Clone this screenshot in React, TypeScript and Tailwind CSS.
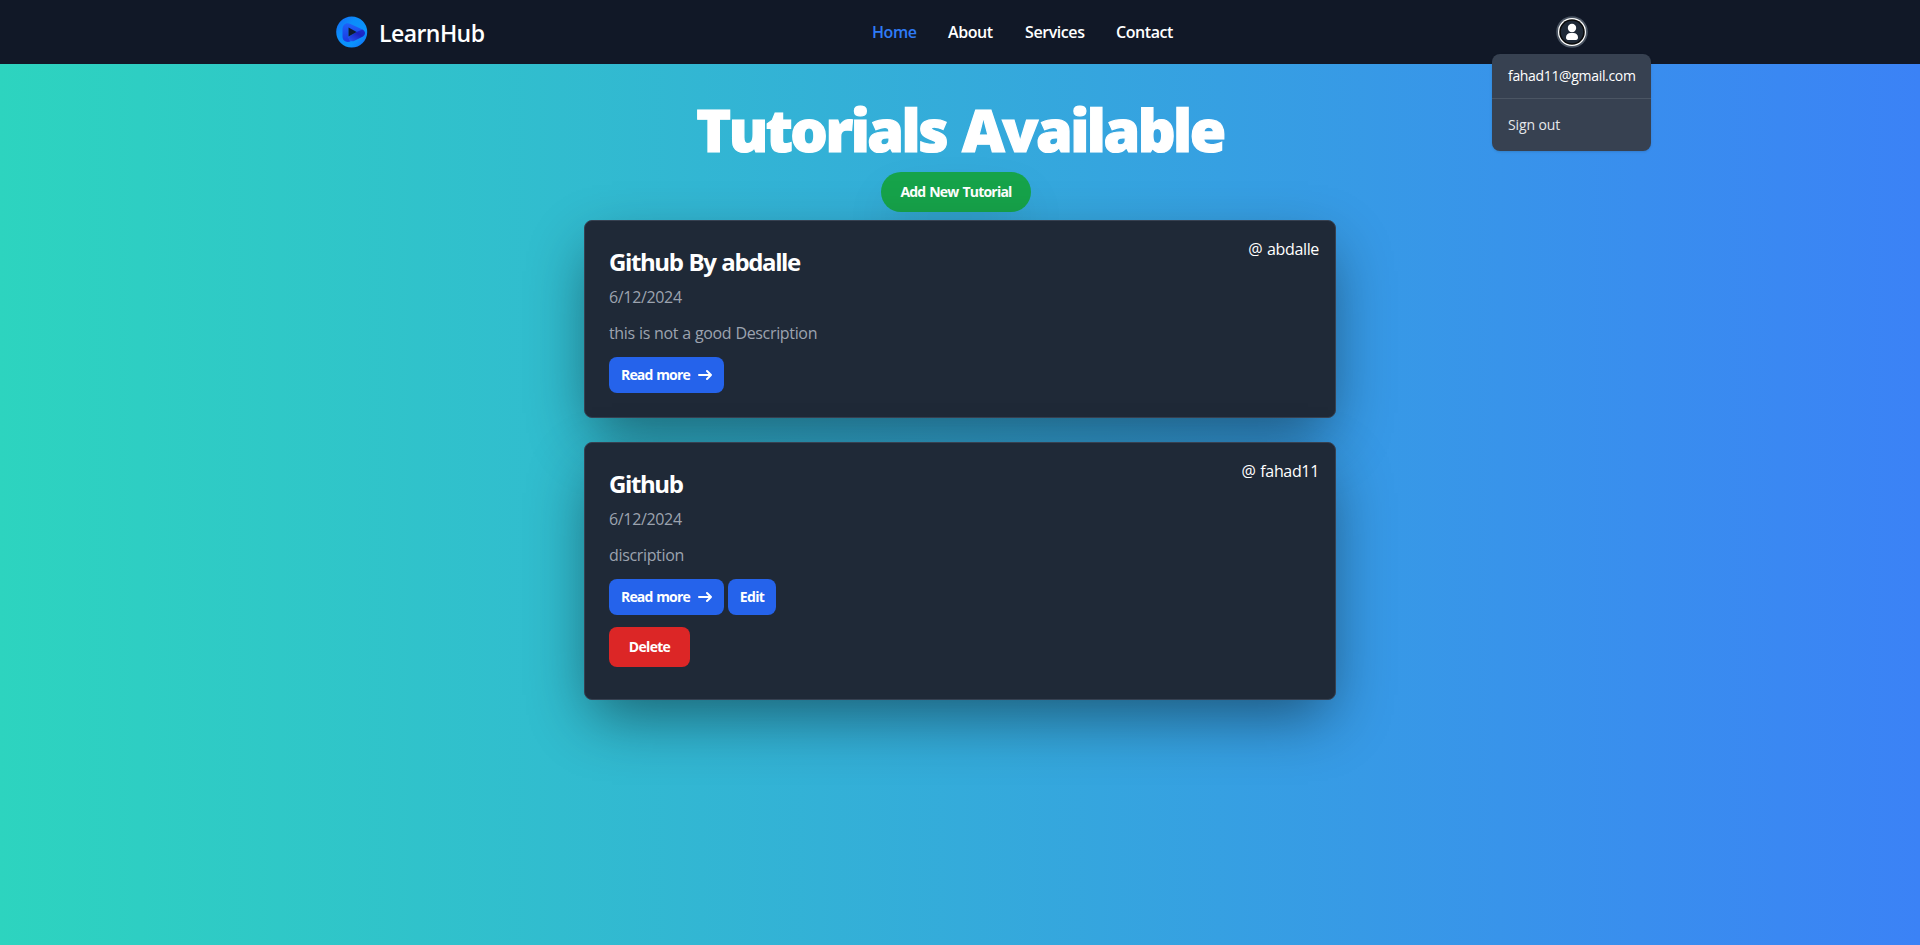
import React from "react";

const navItems = [
  { label: "Home", cls: "text-[#2f7bf6] w-[44px]" },
  { label: "About", cls: "text-white w-[45px]" },
  { label: "Services", cls: "text-white w-[59px]" },
  { label: "Contact", cls: "text-white w-[57px]" },
];

function Logo() {
  return (
    <svg className="h-8 w-8" viewBox="0 0 32 32">
      <defs>
        <linearGradient id="ring" x1="0" y1="0" x2="1" y2="1">
          <stop offset="0" stopColor="#1668f5" />
          <stop offset="0.35" stopColor="#0b8dfa" />
          <stop offset="0.7" stopColor="#0a93fc" />
          <stop offset="1" stopColor="#1668f5" />
        </linearGradient>
        <linearGradient id="bar" x1="0" y1="0" x2="0" y2="1">
          <stop offset="0" stopColor="#1f62f8" />
          <stop offset="1" stopColor="#1b38e0" />
        </linearGradient>
        <linearGradient id="lower" x1="0" y1="1" x2="1" y2="0">
          <stop offset="0" stopColor="#2458f5" />
          <stop offset="0.6" stopColor="#1a22c0" />
          <stop offset="1" stopColor="#1d30d0" />
        </linearGradient>
      </defs>
      <circle cx="15.700" cy="16" r="15.500" fill="url(#ring)" />
      <path d="M6.500 14C6.500 8.500 10 6 14.500 8l12 5.500-5 3.500-9-5v9.500l2 4c-4.500 1.500-8-1-8-5z" fill="url(#bar)" />
      <path d="M20.500 16l6-2.500c3.500 2 3.500 5.500-.5 7.500l-7 3.500c-3.500 2-6.500.5-6.500-3.800z" fill="url(#lower)" />
      <path d="M12.500 11.600v9l8.200-4.500z" fill="#101a30" />
    </svg>
  );
}

function Arrow() {
  return (
    <svg className="ml-2 h-[14px] w-[14px]" fill="none" viewBox="0 0 14 10">
      <path stroke="currentColor" strokeLinecap="round" strokeLinejoin="round" strokeWidth="2" d="M1 5h12m0 0L9 1m4 4L9 9" />
    </svg>
  );
}

function Card({ title, date, text, author, own }: { title: string; date: string; text: string; author: string; own?: boolean }) {
  return (
    <div className="relative w-[752px] rounded-lg border border-[#374151] bg-[#1f2937] p-6 tracking-[-0.34px] shadow-[0_23px_58px_-8px_rgba(0,0,0,0.47)] [word-spacing:0.3px]">
      <span className="absolute top-4 right-4 text-base text-white [word-spacing:1px]">{author}</span>
      <h5 className="mb-[7px] pt-px text-2xl leading-8 font-bold tracking-[-1.38px] text-white [word-spacing:1px]">{title}</h5>
      <p className="mb-3 text-base text-[#9ca3af]">{date}</p>
      <p className="mb-3 text-base text-[#9ca3af]">{text}</p>
      <div className="flex gap-1">
        <button className="flex h-9 w-[115px] items-center rounded-lg bg-[#2563eb] pl-3 text-sm font-bold tracking-[-0.85px] whitespace-nowrap text-white [word-spacing:1px]">
          Read more
          <Arrow />
        </button>
        {own && <button className="h-9 w-12 rounded-lg bg-[#2563eb] text-sm font-bold tracking-[-0.6px] text-white">Edit</button>}
      </div>
      {own && <button className="mt-3 mb-2 block h-10 w-[81px] rounded-lg bg-[#dc2626] text-sm font-bold tracking-[-0.7px] text-white">Delete</button>}
    </div>
  );
}

export default function App() {
  return (
    <div className="min-h-[945px] bg-[linear-gradient(to_right,#2dd4bf,#3b82f6)] font-['Open_Sans',sans-serif]">
      <nav className="h-16 bg-[#111827]">
        <div className="mx-auto flex h-16 w-[1252px] translate-x-[2px] items-center">
          <div className="flex w-[536px] items-center gap-[11px]">
            <Logo />
            <span className="pt-0.5 text-[23px] leading-8 font-semibold tracking-[-0.55px] text-white">LearnHub</span>
          </div>
          <ul className="flex gap-8">
            {navItems.map((n) => (
              <li key={n.label} className={`font-semibold tracking-[-0.42px] whitespace-nowrap ${n.cls}`}>{n.label}</li>
            ))}
          </ul>
          <div className="relative ml-auto">
            <svg className="h-8 w-8" viewBox="0 0 32 32">
              <circle cx="16" cy="16" r="15.800" fill="#4b5563" />
              <circle cx="16" cy="16" r="14" fill="#fff" />
              <circle cx="16" cy="16" r="12.800" fill="#0a0a0a" />
              <circle cx="16" cy="16" r="11.200" fill="#1f2937" />
              <circle cx="16" cy="12" r="4.200" fill="#fff" />
              <path d="M10 21.500c0-3 2-4.500 4.500-4.500h3c2.500 0 4.500 1.500 4.500 4.500 0 1.500-.8 2.500-2 2.500h-8c-1.200 0-2-1-2-2.500z" fill="#fff" />
            </svg>
            <div className="absolute top-[38px] -left-[64px] z-10 w-[159px] rounded-lg bg-[#374151] text-sm shadow">
              <div className="h-[45px] border-b border-[#4b5563] px-4 py-3 tracking-[-0.33px] text-white">fahad11@gmail.com</div>
              <div className="px-4 pt-4 pb-4 tracking-[-0.1px] text-[#e5e7eb]">Sign out</div>
            </div>
          </div>
        </div>
      </nav>
      <main className="flex flex-col items-center pt-9">
        <h1 className="mb-3 -translate-y-px text-[59px] leading-[60px] font-extrabold tracking-[-2.5px] whitespace-nowrap text-white [-webkit-text-stroke:1.2px_white] [word-spacing:3px]">Tutorials Available</h1>
        <button className="mr-2 mb-2 h-10 w-[150px] rounded-full bg-[#16a34a] text-sm font-bold tracking-[-0.78px] whitespace-nowrap text-white shadow-2xl [word-spacing:1px]">Add New Tutorial</button>
        <div className="flex flex-col gap-6">
          <Card title="Github By abdalle" date="6/12/2024" text="this is not a good Description" author="@ abdalle" />
          <Card title="Github" date="6/12/2024" text="discription" author="@ fahad11" own />
        </div>
      </main>
    </div>
  );
}
